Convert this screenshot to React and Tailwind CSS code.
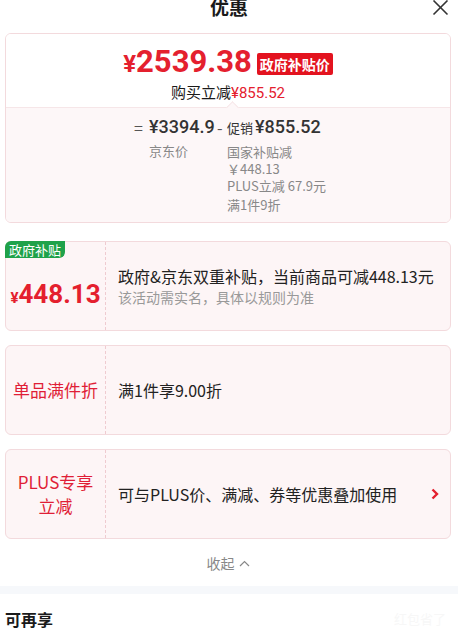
const font = { fontFamily: '"Noto Sans CJK SC", "Noto Sans", sans-serif' };
const num = { fontFamily: 'Roboto, "Noto Sans CJK SC", sans-serif' };

function CloseIcon() {
  return (
    <svg width="17" height="17" viewBox="0 0 17 17" fill="none" stroke="#333" strokeWidth="1.6">
      <path d="M1.5 1.5 L15.5 15.5 M15.5 1.5 L1.5 15.5" />
    </svg>
  );
}

function PromoCard({ left, children, arrow = false, badge }) {
  return (
    <div className="relative flex h-[90px] rounded-[6px] border border-[#f3dadd] bg-[#fdf5f6]">
      {badge && (
        <div className="absolute -left-px -top-px rounded-tl-[6px] rounded-br-[6px] bg-[#1fa24a] px-[4px] text-[13px] leading-[17px] text-white">
          {badge}
        </div>
      )}
      <div className="flex w-[100px] shrink-0 items-center justify-center border-r border-dashed border-[#efcbd0] text-center">
        {left}
      </div>
      <div className="flex flex-1 items-center pl-[12px] pr-[10px]">
        <div className="flex-1">{children}</div>
        {arrow && (
          <svg width="10" height="12" viewBox="0 0 10 12" fill="none" stroke="#e4202e" strokeWidth="2.4">
            <path d="M2.5 1.5 L7 6 L2.5 10.5" />
          </svg>
        )}
      </div>
    </div>
  );
}

export default function App() {
  return (
    <div className="w-[458px] h-[633px] overflow-hidden bg-white text-[#1a1a1a]" style={font}>
      <div className="relative flex h-[33px] flex-col">
        <div className="-mt-[5px] text-center text-[19px] font-bold leading-[24px] text-[#1a1a1a]">优惠</div>
        <div className="absolute right-[9px] top-[-1px]">
          <CloseIcon />
        </div>
      </div>

      <div className="pl-[5px] pr-[7px]">
        <div className="overflow-hidden rounded-[6px] border border-[#f3dadd]">
          <div className="relative h-[73px] bg-white pt-[10px]">
            <div className="flex items-center justify-center gap-[5px]">
              <div className="flex items-baseline font-bold text-[#e4202e]" style={num}>
                <span className="text-[24px] leading-[36px]">¥</span>
                <span className="text-[31px] leading-[36px]">2539.38</span>
              </div>
              <div className="mt-[2px] rounded-[2px] bg-[#e3131f] px-[3px] text-[14px] font-bold leading-[22px] text-white">
                政府补贴价
              </div>
            </div>
            <div className="text-center text-[15px] leading-[20px]">
              购买立减<span className="text-[#e4202e]" style={num}>¥855.52</span>
            </div>
            <div className="absolute bottom-[-5px] left-[222px] h-[9px] w-[9px] rotate-45 border-l border-t border-[#f6e6e8] bg-[#fdf7f8]" />
          </div>
          <div className="flex h-[115px] items-start border-t border-[#f6e6e8] bg-[#fdf7f8] pl-[128px] pt-[7px] text-[#333]">
            <div className="w-[15px] text-[16px] leading-[24px] text-[#555]">=</div>
            <div className="w-[68px]">
              <div className="text-[18px] font-medium leading-[24px]" style={num}>¥3394.9</div>
              <div className="mt-[3px] text-[13px] leading-[17px] text-[#888]">京东价</div>
            </div>
            <div className="w-[10px] text-[16px] leading-[24px] text-[#555]">-</div>
            <div>
              <div className="flex items-baseline gap-[2px] leading-[24px]">
                <span className="text-[13px]">促销</span>
                <span className="text-[18px] font-medium" style={num}>¥855.52</span>
              </div>
              <div className="mt-[3px] text-[13px] leading-[17px] text-[#888]">
                <div>国家补贴减</div>
                <div>￥448.13</div>
                <div>PLUS立减 67.9元</div>
                <div className="mt-[2px]">满1件9折</div>
              </div>
            </div>
          </div>
        </div>

        <div className="mt-[18px] flex flex-col gap-[14px]">
          <PromoCard
            badge="政府补贴"
            left={
              <div className="flex items-baseline pt-[16px] font-bold text-[#e4202e]" style={num}>
                <span className="text-[15px]">¥</span>
                <span className="text-[26px] leading-[30px]">448.13</span>
              </div>
            }
          >
            <div className="text-[16px] leading-[22px] text-[#222]">政府&京东双重补贴，当前商品可减448.13元</div>
            <div className="text-[14px] leading-[20px] text-[#999]">该活动需实名，具体以规则为准</div>
          </PromoCard>

          <PromoCard left={<div className="text-[17px] leading-[24px] text-[#e01e36]">单品满件折</div>}>
            <div className="text-[16px] leading-[22px] text-[#222]">满1件享9.00折</div>
          </PromoCard>

          <PromoCard
            arrow
            left={
              <div className="text-[17px] leading-[24px] text-[#e01e36]">
                PLUS专享
                <br />
                立减
              </div>
            }
          >
            <div className="text-[16px] leading-[22px] text-[#222]">可与PLUS价、满减、券等优惠叠加使用</div>
          </PromoCard>
        </div>

        <div className="mt-[14px] flex items-center justify-center gap-[4px] text-[14px] leading-[20px] text-[#888]">
          收起
          <svg width="11" height="7" viewBox="0 0 11 7" fill="none" stroke="#888" strokeWidth="1.2">
            <path d="M1 6 L5.5 1.5 L10 6" />
          </svg>
        </div>
      </div>

      <div className="mt-[13px] h-[8px] bg-[#f6f8fb]" />

      <div className="flex items-center justify-between pl-[5px] pr-[12px] pt-[14px]">
        <div className="text-[16px] font-bold leading-[22px] text-[#1a1a1a]">可再享</div>
        <div className="text-[13px] text-[#f7f7f7]">红包省了</div>
      </div>
    </div>
  );
}
